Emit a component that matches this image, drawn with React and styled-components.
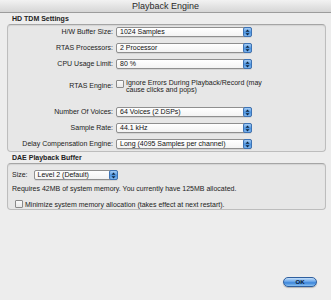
import React from "react";
import styled, { createGlobalStyle } from "styled-components";

const Global = createGlobalStyle`
  html, body { margin: 0; padding: 0; background: #ececec; }
  body { font-family: "Liberation Sans", Arial, sans-serif; }
`;

const Window = styled.div`
  width: 331px;
  height: 300px;
  background: #ededed;
  display: flex;
  flex-direction: column;
  overflow: hidden;
  color: #111;
`;

const TitleBar = styled.div`
  height: 13px;
  flex: none;
  display: flex;
  align-items: center;
  justify-content: center;
  background: linear-gradient(#f2f2f2, #d6d6d6);
  border-bottom: 1px solid #9c9c9c;
  font-size: 9px;
  color: #2a2a2a;
  box-sizing: border-box;
`;

const Body = styled.div`
  flex: 1;
  display: flex;
  flex-direction: column;
  padding: 0 5px 0 7px;
`;

const GroupLabel = styled.div`
  height: 10px;
  margin-top: ${(p) => p.$top}px;
  padding-left: 5px;
  font-size: 7px;
  font-weight: bold;
  line-height: 10px;
  color: #222;
`;

const GroupBox = styled.div`
  border: 1px solid #bdbdbd;
  border-top-color: #a5a5a5;
  border-radius: 4px;
  background: #e7e7e7;
  box-shadow: inset 0 1px 1px rgba(0,0,0,0.08);
  padding: ${(p) => p.$pad};
  display: flex;
  flex-direction: column;
`;

const Row = styled.div`
  display: grid;
  grid-template-columns: 105px auto;
  column-gap: 3px;
  align-items: center;
  margin-top: ${(p) => p.$gap || 0}px;
`;

const Label = styled.div`
  text-align: right;
  font-size: 7px;
  line-height: 10px;
  color: #222;
  white-space: nowrap;
`;

const Popup = styled.div`
  position: relative;
  width: ${(p) => p.$w}px;
  height: 10px;
  box-sizing: border-box;
  border: 1px solid #8f8f8f;
  border-radius: 2px;
  background: linear-gradient(#ffffff, #f3f3f3);
  font-size: 7px;
  line-height: 8px;
  padding-left: 3px;
  color: #111;
  white-space: nowrap;
  box-shadow: 0 1px 0 rgba(0,0,0,0.08);
`;

const Stepper = styled.div`
  position: absolute;
  right: -1px;
  top: -1px;
  width: 9px;
  height: 10px;
  box-sizing: border-box;
  border-radius: 2px;
  border: 1px solid #3d73b5;
  background: linear-gradient(#a6cdf5, #4d94e0 55%, #7fb6ee);
  display: flex;
  align-items: center;
  justify-content: center;
`;

const CheckRow = styled.div`
  display: flex;
  align-items: ${(p) => (p.$center ? "center" : "flex-start")};
  gap: 2px;
  margin-top: ${(p) => p.$top || 0}px;
  padding-left: ${(p) => p.$indent || 0}px;
`;

const Box = styled.div`
  width: 8px;
  height: 8px;
  flex: none;
  box-sizing: border-box;
  border: 1px solid #8a8a8a;
  border-radius: 1px;
  background: linear-gradient(#fafafa, #e9e9e9);
  margin-top: ${(p) => p.$mt || 0}px;
`;

const CheckText = styled.div`
  font-size: 7px;
  line-height: 7px;
  color: #222;
`;

const InlineRow = styled.div`
  display: flex;
  align-items: center;
  gap: 6px;
  padding-left: 4px;
`;

const Note = styled.div`
  font-size: 7px;
  line-height: 9px;
  margin-top: ${(p) => p.$top}px;
  padding-left: 4px;
  color: #222;
  white-space: nowrap;
`;

const Footer = styled.div`
  flex: 1;
  display: flex;
  justify-content: flex-end;
  align-items: flex-end;
  padding: 0 9px 13px 0;
`;

const OkButton = styled.div`
  width: 34px;
  height: 10px;
  box-sizing: border-box;
  border-radius: 6px;
  border: 1px solid #2f5f9e;
  background: linear-gradient(#c5e0fa, #5d9ee6 50%, #3a83d8 60%, #8cc2f2);
  font-size: 6px;
  font-weight: bold;
  line-height: 8px;
  text-align: center;
  color: #0b1a33;
  box-shadow: 0 1px 1px rgba(0,0,0,0.25);
`;

const Arrows = () => (
  <svg width="5" height="7" viewBox="0 0 5 7">
    <path d="M2.5 0.5 L4.5 2.7 L0.5 2.7 Z" fill="#0d2540" />
    <path d="M2.5 6.5 L4.5 4.3 L0.5 4.3 Z" fill="#0d2540" />
  </svg>
);

const Select = ({ w, children }) => (
  <Popup $w={w}>
    {children}
    <Stepper>
      <Arrows />
    </Stepper>
  </Popup>
);

export default function App() {
  return (
    <>
      <Global />
      <Window>
        <TitleBar>Playback Engine</TitleBar>
        <Body>
          <GroupLabel $top={1}>HD TDM Settings</GroupLabel>
          <GroupBox $pad="2px 0 2px 0">
            <Row>
              <Label>H/W Buffer Size:</Label>
              <Select w={136}>1024 Samples</Select>
            </Row>
            <Row $gap={6}>
              <Label>RTAS Processors:</Label>
              <Select w={136}>2 Processor</Select>
            </Row>
            <Row $gap={6}>
              <Label>CPU Usage Limit:</Label>
              <Select w={136}>80 %</Select>
            </Row>
            <Row $gap={10}>
              <Label>RTAS Engine:</Label>
              <CheckRow>
                <Box $mt={1} />
                <CheckText>
                  Ignore Errors During Playback/Record (may
                  <br />
                  cause clicks and pops)
                </CheckText>
              </CheckRow>
            </Row>
            <Row $gap={14}>
              <Label>Number Of Voices:</Label>
              <Select w={136}>64 Voices (2 DSPs)</Select>
            </Row>
            <Row $gap={6}>
              <Label>Sample Rate:</Label>
              <Select w={136}>44.1 kHz</Select>
            </Row>
            <Row $gap={6}>
              <Label>Delay Compensation Engine:</Label>
              <Select w={136}>Long (4095 Samples per channel)</Select>
            </Row>
          </GroupBox>
          <GroupLabel $top={1}>DAE Playback Buffer</GroupLabel>
          <GroupBox $pad="6px 0 1px 0">
            <InlineRow>
              <Label>Size:</Label>
              <Select w={84}>Level 2 (Default)</Select>
            </InlineRow>
            <Note $top={4}>
              Requires 42MB of system memory. You currently have 125MB allocated.
            </Note>
            <CheckRow $center $top={7} $indent={7}>
              <Box />
              <CheckText>Minimize system memory allocation (takes effect at next restart).</CheckText>
            </CheckRow>
          </GroupBox>
          <Footer>
            <OkButton>OK</OkButton>
          </Footer>
        </Body>
      </Window>
    </>
  );
}
